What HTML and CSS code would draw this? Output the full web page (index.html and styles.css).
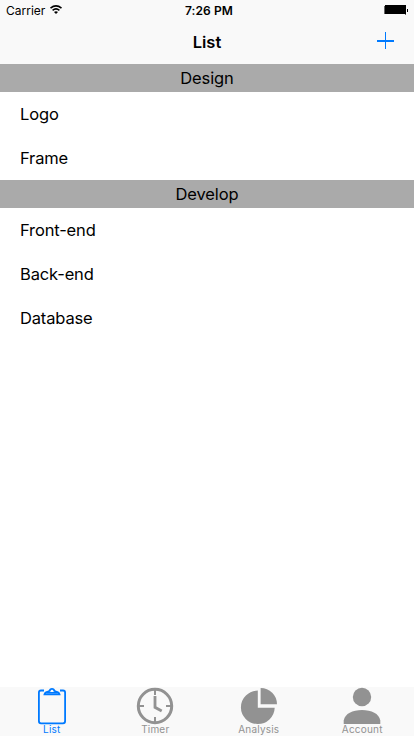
FILE: index.html
```html
<!DOCTYPE html>
<html lang="en">
<head>
<meta charset="utf-8">
<title>List</title>
<link rel="stylesheet" href="styles.css">
</head>
<body>
<div class="screen">
  <header>
    <div class="status">
      <div class="carrier"><span>Carrier</span>
        <svg width="12" height="9" viewBox="0 0 12 9"><g fill="none" stroke="#000" stroke-width="1.6"><path d="M.5 3.1Q6-1.4 11.5 3.1"/><path d="M2.6 5.3Q6 2.5 9.4 5.3"/></g><path d="M4 7Q6 5.4 8 7L6 9Z"/></svg>
      </div>
      <div class="time">7:26 PM</div>
      <svg class="battery" width="24" height="10" viewBox="0 0 24 10"><path d="M1 0h21v9H1zM23 4h1v3h-1z"/><path d="M.5 1v8M21.5 1v9" stroke="#000" stroke-width=".6"/></svg>
    </div>
    <div class="nav">
      <h1>List</h1>
      <svg class="add" width="17" height="17" viewBox="0 0 17 17"><path d="M8 0h1v17h-1zM0 8h17v2h-17z" fill="#007aff"/></svg>
    </div>
  </header>
  <main>
    <h2>Design</h2>
    <ul><li>Logo</li><li>Frame</li></ul>
    <h2>Develop</h2>
    <ul><li>Front-end</li><li>Back-end</li><li>Database</li></ul>
  </main>
  <nav class="tabs">
    <div class="tab active">
      <svg width="38" height="38" viewBox="0 0 38 38" fill="none" stroke="currentColor" stroke-width="1.8"><path d="M11 3.5H8Q5.9 3.5 5.9 5.6V34Q5.9 36.3 8 36.3H30Q32.1 36.3 32.1 34V5.6Q32.1 3.5 30 3.5H27"/><path d="M11.5 7.3Q12 5.3 14 5L16.7 3.8Q17 1.8 19 1.8T21.3 3.8L24 5Q26 5.3 26.5 7.3Z"/><path d="M14 5.8H24" stroke-width="1.6"/></svg>
      <span>List</span>
    </div>
    <div class="tab">
      <svg width="38" height="38" viewBox="0 0 38 38" fill="none" stroke="currentColor"><circle cx="19" cy="19" r="16.7" stroke-width="3"/><path d="M19 3v5M19 30v5M3 19h5M30 19h5" stroke-width="2"/><path d="M19 9V20.3L25.7 24" stroke-width="2.8"/></svg>
      <span>Timer</span>
    </div>
    <div class="tab">
      <svg width="38" height="38" viewBox="0 0 38 38" fill="currentColor"><path d="M17.8 3.6V20.8H34.7A16.9 16.7 0 1 1 17.8 3.6Z"/><path d="M20.6 1A16.6 16.3 0 0 1 37 17.3H20.6Z"/></svg>
      <span>Analysis</span>
    </div>
    <div class="tab">
      <svg width="38" height="38" viewBox="0 0 38 38" fill="currentColor"><circle cx="19" cy="10" r="9.2"/><path d="M.7 37V33.5C2 26.5 9.5 23 19 23S36 26.5 37.3 33.5V37Z"/></svg>
      <span>Account</span>
    </div>
  </nav>
</div>
</body>
</html>
```
FILE: styles.css
```css
* { box-sizing: border-box; }
body { margin: 0; font-family: Inter, sans-serif; color: #000; }
svg { display: block; }
.screen { height: 736px; display: flex; flex-direction: column; background: #fff; }
header { height: 64px; background: #f9f9f9; }
.status { height: 20px; display: grid; grid-template-columns: 1fr auto 1fr; align-items: center; padding: 0 6px; font-size: 12px; }
.carrier { display: flex; align-items: center; gap: 5px; }
.carrier svg { margin-top: -1px; }
.time { font-weight: 600; letter-spacing: .1px; padding-left: 4px; }
.battery { justify-self: end; }
.nav { height: 44px; display: grid; grid-template-columns: 1fr auto 1fr; align-items: center; padding: 0 20px; }
h1 { grid-column: 2; margin: 0; font-size: 16.5px; line-height: 20px; font-weight: 600; }
.add { justify-self: end; margin-top: -3px; }
main { flex: 1; }
h2 { margin: 0; height: 28px; line-height: 28px; background: #aaa; text-align: center; font-size: 16.5px; letter-spacing: -.1px; font-weight: 400; }
ul { margin: 0; padding: 0; list-style: none; }
li { height: 44px; line-height: 44px; padding-left: 20px; font-size: 16.5px; letter-spacing: -.15px; }
.tabs { height: 49px; display: grid; grid-template-columns: repeat(4, 1fr); background: #f9f9f9; color: #929292; }
.tab { display: flex; flex-direction: column; align-items: center; font-size: 10px; line-height: 10px; letter-spacing: .2px; }
.tab span { margin-top: -1px; }
.active { color: #007aff; }
```
